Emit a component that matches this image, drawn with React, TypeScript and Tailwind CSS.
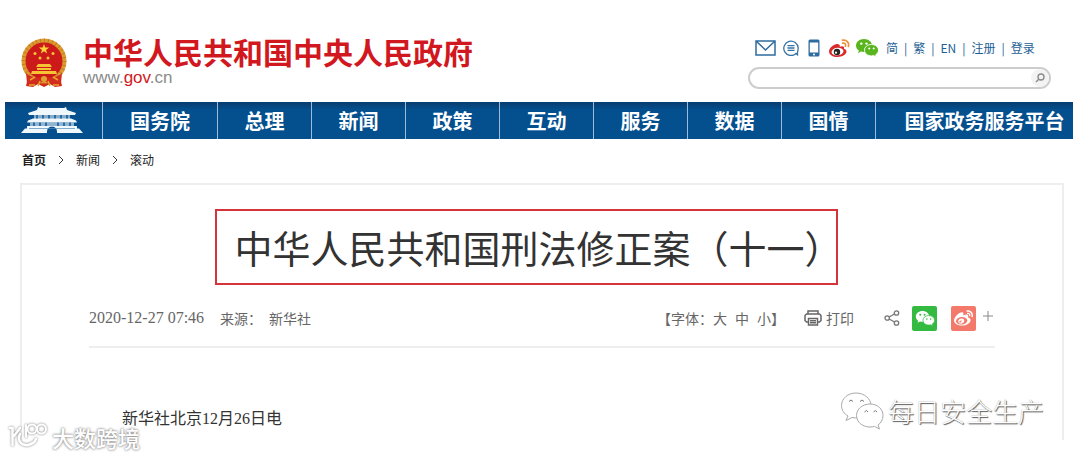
import { FaWeibo } from 'react-icons/fa'

interface NavItem {
  label: string
  className?: string
}

const navItems: NavItem[] = [
  { label: '国务院' },
  { label: '总理' },
  { label: '新闻' },
  { label: '政策' },
  { label: '互动' },
  { label: '服务' },
  { label: '数据' },
  { label: '国情' },
  { label: '国家政务服务平台', className: 'pl-5' },
]

const topLinks = ['简', '繁', 'EN', '注册', '登录']

function Emblem() {
  return (
    <svg viewBox="0 0 46 50" className="h-[50px] w-[46px]" aria-hidden="true">
      <path d="M8 35L5 48L12 49L17 46L23 49L29 46L34 49L41 48L38 35Z" fill="#cf2a1b" />
      <circle cx="23" cy="23" r="20.500" fill="#cc1a1a" stroke="#dd9a2e" strokeWidth="4" />
      <circle cx="23" cy="23" r="20.500" fill="none" stroke="#a8641c" strokeWidth="4" strokeDasharray="1 3" opacity=".5" />
      <path d="M23 6l1.300 3.600h3.800L25 11.900l1.200 3.600-3.200-2.200-3.200 2.200 1.200-3.600-3.100-2.300h3.800z" fill="#fbd43a" />
      <g fill="#f6c433">
        <circle cx="14" cy="15.500" r="1.500" />
        <circle cx="32" cy="15.500" r="1.500" />
        <circle cx="19" cy="20" r="1.500" />
        <circle cx="27" cy="20" r="1.500" />
        <path d="M17 26h12l2 3H15zM16 30h14v2H16zM11 33h24l1 3H10z" />
      </g>
      <path d="M5 35c5 5 11 5 18 4 7 1 13 1 18-4l-1 10c-5 2-11 1-17-2-6 3-12 4-17 2z" fill="#d22c1e" />
      <path d="M9 42l5-3M37 42l-5-3M19 43l-2 5M27 43l2 5M8 47h6M32 47h6" stroke="#e9a62c" strokeWidth="1.500" />
      <circle cx="23" cy="41" r="3" fill="#e2a02e" />
    </svg>
  )
}

function GateTower() {
  return (
    <svg viewBox="0 0 62 27" className="h-[27px] w-[62px]" aria-hidden="true">
      <g fill="#f0f8fc">
        <path d="M17 0l2 1h24l2-1 1 3 9 3-1 2H8L7 6l9-3z" />
        <path d="M13 8h36v4H13z" opacity=".55" />
        <path d="M12 11.500h38l5 2 1 2H6l1-2z" />
        <path d="M9 15.500h44v4H9z" opacity=".6" />
        <path d="M6 19h50v2.500h2L62 26H36v-1.500a5 5 0 0 0-10 0V26H0l4-4.500h2z" />
      </g>
      <path d="M16 8v3.500M22 8v3.500M28 8v3.500M34 8v3.500M40 8v3.500M46 8v3.500M13 15.500V19M19 15.500V19M25 15.500V19M37 15.500V19M43 15.500V19M49 15.500V19" stroke="#0b5596" strokeWidth="1.500" />
      <path d="M8 21.500h46" stroke="#4f8bbb" strokeWidth=".7" />
    </svg>
  )
}

function WeChat({ className, fill, eye }: { className: string; fill: string; eye: string }) {
  return (
    <svg viewBox="0 0 24 20" className={className} aria-hidden="true">
      <path d="M9 1C4.500 1 1 3.900 1 7.500c0 2.100 1.100 3.900 2.900 5.100L3 15.200l3-1.600c1 .3 2 .4 3 .4 4.500 0 8-2.900 8-6.500S13.500 1 9 1z" fill={fill} />
      <path d="M16.500 6.500c-4 0-7 2.500-7 5.700s3 5.700 7 5.700c.8 0 1.600-.1 2.300-.3l2.500 1.600-.6-2.500c1.600-1 2.800-2.600 2.800-4.500 0-3.200-3-5.700-7-5.700z" fill={fill} stroke={eye} strokeWidth=".9" />
      <g fill={eye}>
        <circle cx="6.300" cy="5.600" r="1.200" />
        <circle cx="11.500" cy="5.600" r="1.200" />
        <circle cx="14.200" cy="10.600" r="1" />
        <circle cx="18.700" cy="10.600" r="1" />
      </g>
    </svg>
  )
}

function WeiboColor() {
  return (
    <svg viewBox="0 0 21 18" className="h-[18px] w-[21px]" aria-hidden="true">
      <path d="M8 5C5 5 0 9 0 12.500 0 16 4 18 8.500 18c5 0 9-2.600 9-5.400 0-1.600-1.200-2.500-2.600-2.900.7-2-.5-3.300-4.200-2C11.300 5.800 10 5 8 5z" fill="#d9292b" />
      <ellipse cx="8.500" cy="12.600" rx="6" ry="3.800" fill="#fff" transform="rotate(-7 8.500 12.600)" />
      <circle cx="8" cy="13" r="3.200" fill="#252525" />
      <circle cx="7" cy="13.700" r="1.100" fill="#fff" />
      <path d="M13.500 1.200c4-.8 7 2.300 5.900 6.300M13.800 4.200c1.900-.4 3.200 1 2.700 2.900" fill="none" stroke="#ee9138" strokeWidth="1.700" strokeLinecap="round" />
    </svg>
  )
}

function TopTools() {
  return (
    <div className="flex h-6 items-center pl-[7px] text-[#1d5f94]">
      <a href="#mail" aria-label="邮箱">
        <svg viewBox="0 0 21 16" className="h-4 w-[21px]" fill="none" stroke="#2d6c9f" strokeWidth="1.500">
          <path d="M1 1h19v14H1zM1 1l9.500 9L20 1" />
        </svg>
      </a>
      <a href="#chat" aria-label="留言" className="ml-[7px]">
        <svg viewBox="0 0 16 16" className="size-4" fill="none" stroke="#3674a5" strokeWidth="1.300">
          <path d="M13 13.500A7.200 7.200 0 1 1 15.200 8c0 2-.5 3.300-.7 4.300v2.500zM4.500 5.700h7M4.500 8h7M4.500 10.300h7" />
        </svg>
      </a>
      <a href="#mobile" aria-label="手机" className="ml-[9px]">
        <svg viewBox="0 0 12 18" className="h-[18px] w-3">
          <rect x=".5" y=".5" width="11" height="17" rx="1.500" fill="#2d6c9f" />
          <path d="M1.800 3.500h8.400v10H1.800z" fill="#fff" />
          <circle cx="6" cy="15.500" r="1" fill="#fff" />
        </svg>
      </a>
      <a href="#weibo" aria-label="微博" className="ml-[9px]">
        <WeiboColor />
      </a>
      <a href="#wechat" aria-label="微信" className="ml-[5px]">
        <WeChat className="h-5 w-6" fill="#59b51d" eye="#ffffff" />
      </a>
      <ul className="ml-[7px] flex text-xs">
        {topLinks.map((label, i) => (
          <li key={label} className="flex">
            {i > 0 && <span className="px-[6px]">|</span>}
            <a href={`#${label}`}>{label}</a>
          </li>
        ))}
      </ul>
    </div>
  )
}

function SiteHeader() {
  return (
    <header className="flex items-start justify-between pt-9 pr-[29px] pb-[13px] pl-[21px]">
      <a href="#home" className="flex items-start gap-4 pt-0.5 font-['Liberation_Sans','Noto_Sans_CJK_SC',sans-serif]">
        <Emblem />
        <div>
          <div className="text-[30px] leading-8 font-bold text-[#d1181e]">中华人民共和国中央人民政府</div>
          <div className="text-[17px] leading-4 text-[#8a8a8a]">
            www.<span className="text-[#d1181e]">gov</span>.cn
          </div>
        </div>
      </a>
      <div className="w-[303px]">
        <TopTools />
        <form className="mt-[7px] flex h-[22px] items-center rounded-full border-2 border-[#cdcdcd] bg-white">
          <input type="text" aria-label="搜索" className="min-w-0 flex-1 bg-transparent px-3 text-xs outline-none" />
          <button type="button" aria-label="搜索" className="flex size-[18px] items-center justify-center rounded-full bg-[#f3f3f3]">
            <svg viewBox="0 0 10 10" className="size-[10px]" fill="none" stroke="#8c8c8c" strokeWidth="1.400">
              <circle cx="6" cy="4" r="3" />
              <path d="M4 6L1 9" />
            </svg>
          </button>
        </form>
      </div>
    </header>
  )
}

function ArticleMeta() {
  return (
    <div className="mx-[67px] mt-5 flex items-center justify-between border-b-2 border-[#eeeeee] pb-[15px] text-sm text-[#666]">
      <div className="flex items-center">
        <time className="font-[Liberation_Serif] text-base">2020-12-27 07:46</time>
        <span className="ml-4">来源：</span>
        <span className="ml-[7px]">新华社</span>
      </div>
      <div className="flex h-[26px] items-center">
        <div className="flex items-center">
          <span>【字体：</span>
          <button type="button">大</button>
          <button type="button" className="ml-2">中</button>
          <button type="button" className="ml-2">小</button>
          <span>】</span>
        </div>
        <button type="button" className="ml-[19px] flex items-center gap-1">
          <svg viewBox="0 0 18 16" className="h-4 w-[18px]" fill="none" stroke="#666" strokeWidth="1.500" aria-hidden="true">
            <path d="M4 4V1h10v3M4 12H2.500L1 10.500v-5L2.500 4h13L17 5.500v5L15.500 12H14" />
            <path d="M4.500 8.500h9V15h-9zM6 10.700h6M6 12.800h6" />
          </svg>
          打印
        </button>
        <a href="#share" aria-label="分享" className="ml-[30px]">
          <svg viewBox="0 0 16 16" className="size-4" fill="none" stroke="#777" strokeWidth="1.300">
            <circle cx="3.200" cy="8" r="2.200" />
            <circle cx="12.500" cy="3" r="2.200" />
            <circle cx="12.500" cy="13" r="2.200" />
            <path d="M5.200 7l5.300-3M5.200 9l5.300 3" />
          </svg>
        </a>
        <a href="#share-wechat" aria-label="分享到微信" className="ml-3 flex size-[25px] items-center justify-center rounded-xs bg-[#35ba41]">
          <WeChat className="h-[17px] w-5" fill="#ffffff" eye="#35ba41" />
        </a>
        <a href="#share-weibo" aria-label="分享到微博" className="ml-[14px] flex size-[25px] items-center justify-center rounded-xs bg-[#f3796b] text-white">
          <FaWeibo className="size-[19px]" />
        </a>
        <button type="button" aria-label="更多" className="mr-px mb-1 ml-[6px]">
          <svg viewBox="0 0 12 12" className="size-3" stroke="#888" strokeWidth="1">
            <path d="M6 1v10M1 6h10" />
          </svg>
        </button>
      </div>
    </div>
  )
}

function AccountMark() {
  return (
    <div className="absolute right-[18px] bottom-[9px] flex items-center gap-1 text-[26px] leading-10 font-light text-white [text-shadow:1px_1px_1px_#555,0_0_1px_#999]">
      <svg viewBox="0 0 44 38" className="h-[38px] w-11" fill="#fff" stroke="#aaa" strokeWidth="1" aria-hidden="true">
        <path d="M16 1C8 1 1.500 6.500 1.500 13.500c0 4.500 2.500 8.300 6.500 10.500l-2 4.500 6-3c10 2 19-3 19-12C31 6.500 24 1 16 1z" />
        <path d="M30 12c-7.500 0-13.500 5-13.500 11.500S22.500 35 30 35c1.500 0 3-.2 4.500-.6l5 2.600-1.500-4c3-2 5-5.500 5-9.500C43 17 37.500 12 30 12z" />
        <path d="M9 9.500q2-3 4 0M20 9.500q2-3 4 0M24.500 20q2-3 3.500 0M33.500 20q2-3 3.500 0" fill="none" stroke="#777" />
      </svg>
      每日安全生产
    </div>
  )
}

function SiteMark() {
  return (
    <div className="absolute bottom-[6px] left-2 flex items-center gap-1 text-[22px] leading-7 font-medium text-white [text-shadow:0_0_2px_#888,0_0_3px_#999]">
      <svg viewBox="0 0 40 28" className="h-7 w-10 drop-shadow-[0_0_1px_#777]" fill="none" stroke="#fff" strokeWidth="2.500" strokeLinecap="round" aria-hidden="true">
        <path d="M2 5h2.500v17M12 5l-6 8M12 11c-3 6 1 12 8 11 4-1 7-3 8-6" />
        <path d="M18 2v12" strokeWidth="2" />
        <circle cx="24" cy="6" r="4.500" strokeWidth="2" />
        <circle cx="33.500" cy="6" r="4.500" strokeWidth="2" />
      </svg>
      大数跨境
    </div>
  )
}

export default function App() {
  return (
    <div className="relative bg-white pb-[17px] font-['Noto_Sans_CJK_SC',sans-serif]">
      <SiteHeader />

      <nav className="mr-[7px] ml-[5px] grid h-[37px] grid-cols-[97fr_115fr_repeat(7,94fr)_198fr] bg-[linear-gradient(#083d70,#04508f_8px)] text-xl font-bold text-white">
        <a href="#home" aria-label="首页" className="flex items-center justify-center pr-1">
          <GateTower />
        </a>
        {navItems.map(item => (
          <a
            key={item.label}
            href={`#${item.label}`}
            className={`flex items-center justify-center border-l border-[#9dbbd6] whitespace-nowrap ${item.className ?? ''}`}
          >
            {item.label}
          </a>
        ))}
      </nav>

      <div className="flex items-center gap-3 pt-[13px] pb-[15px] pl-[22px] text-xs text-[#222]">
        <a href="#home" className="font-bold">首页</a>
        <svg viewBox="0 0 6 10" className="h-[10px] w-[6px]" fill="none" stroke="#333"><path d="M1 1l4 4-4 4" /></svg>
        <a href="#news">新闻</a>
        <svg viewBox="0 0 6 10" className="h-[10px] w-[6px]" fill="none" stroke="#333"><path d="M1 1l4 4-4 4" /></svg>
        <a href="#roll">滚动</a>
      </div>

      <article className="relative mr-4 ml-5 border-x-2 border-t-2 border-[#eeeeee] pt-6 pb-[9px]">
        <div className="flex justify-center pr-8">
          <h1 className="h-[76px] w-[623px] border-2 border-[#d5343c] pl-[18px] text-[38px] leading-[72px] whitespace-nowrap text-[#333]">
            中华人民共和国刑法修正案（十一）
          </h1>
        </div>
        <ArticleMeta />
        <p className="mt-[59px] pl-[100px] font-['Liberation_Serif','Noto_Sans_CJK_SC',serif] text-base leading-6 text-[#333]">
          新华社北京12月26日电
        </p>
        <AccountMark />
      </article>

      <SiteMark />
    </div>
  )
}
